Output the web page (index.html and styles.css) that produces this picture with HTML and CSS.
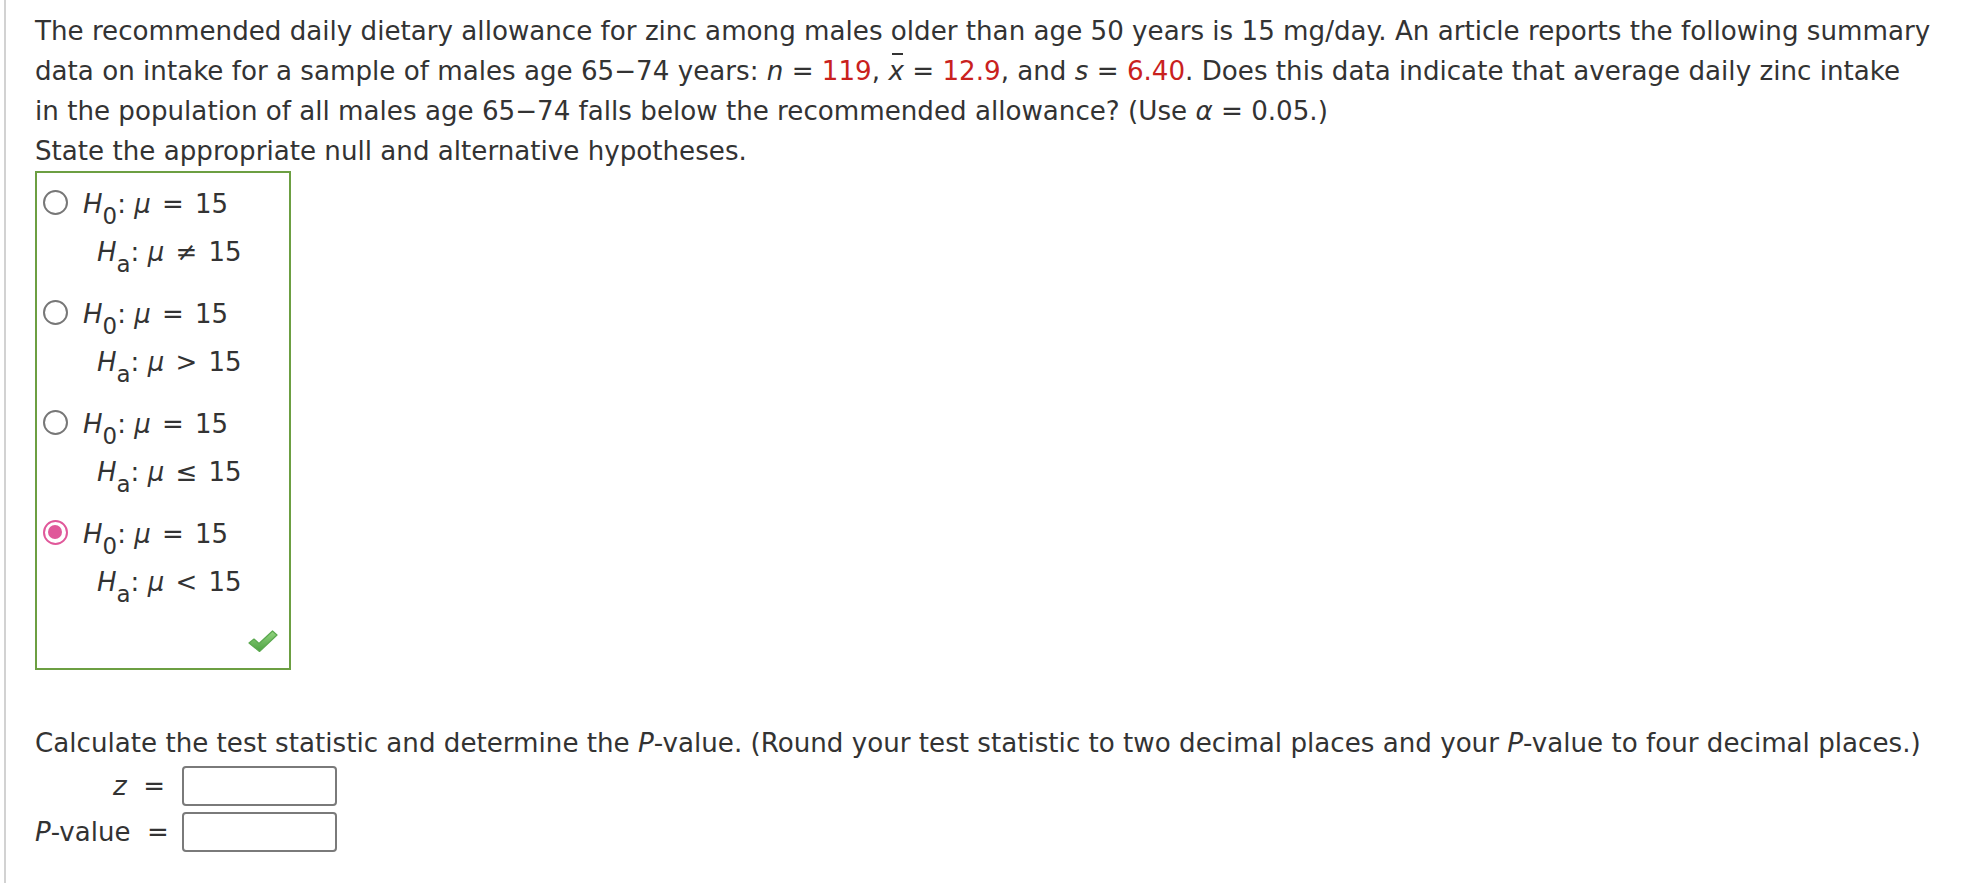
FILE: index.html
```html
<!DOCTYPE html>
<html lang="en">
<head>
<meta charset="utf-8">
<title>Hypothesis test</title>
<link rel="stylesheet" href="styles.css">
</head>
<body>
<div class="page">
  <p class="question">The recommended daily dietary allowance for zinc among males older than age 50 years is 15 mg/day. An article reports the following summary<br>data on intake for a sample of males age 65&minus;74 years: <i>n</i> = <span class="val">119</span>, <span class="xbar"><i>x</i></span> = <span class="val">12.9</span>, and <i>s</i> = <span class="val">6.40</span>. Does this data indicate that average daily zinc intake<br>in the population of all males age 65&minus;74 falls below the recommended allowance? (Use <i>&alpha;</i> = 0.05.)</p>
  <p class="question">State the appropriate null and alternative hypotheses.</p>

  <div class="choices">
    <div class="option">
      <span class="radio"></span>
      <div class="hyp">
        <div class="h0"><i>H</i><sub>0</sub>: <i>&mu;</i> <span class="rel">=</span> 15</div>
        <div class="ha"><i>H</i><sub class="suba">a</sub>: <i>&mu;</i> <span class="rel">&ne;</span> 15</div>
      </div>
    </div>
    <div class="option">
      <span class="radio"></span>
      <div class="hyp">
        <div class="h0"><i>H</i><sub>0</sub>: <i>&mu;</i> <span class="rel">=</span> 15</div>
        <div class="ha"><i>H</i><sub class="suba">a</sub>: <i>&mu;</i> <span class="rel">&gt;</span> 15</div>
      </div>
    </div>
    <div class="option">
      <span class="radio"></span>
      <div class="hyp">
        <div class="h0"><i>H</i><sub>0</sub>: <i>&mu;</i> <span class="rel">=</span> 15</div>
        <div class="ha"><i>H</i><sub class="suba">a</sub>: <i>&mu;</i> <span class="rel">&le;</span> 15</div>
      </div>
    </div>
    <div class="option">
      <span class="radio checked"></span>
      <div class="hyp">
        <div class="h0"><i>H</i><sub>0</sub>: <i>&mu;</i> <span class="rel">=</span> 15</div>
        <div class="ha"><i>H</i><sub class="suba">a</sub>: <i>&mu;</i> <span class="rel">&lt;</span> 15</div>
      </div>
    </div>
    <div class="mark">
      <svg width="32" height="25" viewBox="0 0 32 25" aria-hidden="true">
        <defs>
          <linearGradient id="g" x1="0" y1="0" x2="0" y2="1">
            <stop offset="0" stop-color="#92d47f"/>
            <stop offset="1" stop-color="#4ea243"/>
          </linearGradient>
        </defs>
        <path d="M2 14 L7 10 L12 14.5 L25.5 2 L30 6 L12.5 22.5 Z" fill="url(#g)" stroke="#5aa84e" stroke-width="1.2" stroke-linejoin="round"/>
      </svg>
    </div>
  </div>

  <p class="question calc">Calculate the test statistic and determine the <i>P</i>-value. (Round your test statistic to two decimal places and your <i>P</i>-value to four decimal places.)</p>
  <div class="answers">
    <span class="lbl"><i>z</i> &nbsp;=</span>
    <span class="field"></span>
    <span class="lbl"><i>P</i>-value &nbsp;=</span>
    <span class="field"></span>
  </div>
</div>
</body>
</html>
```

FILE: styles.css
```css
html, body {
  margin: 0;
  padding: 0;
  background: #ffffff;
}

body {
  font-family: "DejaVu Sans", "Liberation Sans", sans-serif;
  font-size: 26px;
  color: #333333;
}

.page {
  margin-left: 4px;
  border-left: 2px solid #d2d2d2;
  padding: 11px 0 0 29px;
  min-height: 883px;
  box-sizing: border-box;
}

.question {
  margin: 0;
  font-size: 26.15px;
  line-height: 40px;
  white-space: nowrap;
}

.val {
  color: #c9211e;
}

.xbar {
  position: relative;
}

.xbar::before {
  content: "";
  position: absolute;
  left: 4px;
  right: 1px;
  top: -3px;
  border-top: 2px solid #333333;
}

.choices {
  width: 256px;
  height: 499px;
  box-sizing: border-box;
  border: 2px solid #6c9f42;
  padding: 7px 0 0 6px;
  display: flex;
  flex-direction: column;
  gap: 14px;
}

.option {
  display: flex;
  align-items: flex-start;
  gap: 15px;
}

.radio {
  flex: none;
  width: 25px;
  height: 25px;
  margin-top: 10px;
  box-sizing: border-box;
  border: 2px solid #777777;
  border-radius: 50%;
  background: #ffffff;
  position: relative;
}

.radio.checked {
  border: 2.5px solid #e0589a;
}

.radio.checked::after {
  content: "";
  position: absolute;
  left: 3px;
  top: 3px;
  width: 14px;
  height: 14px;
  border-radius: 50%;
  background: #e0589a;
}

.hyp {
  line-height: 48px;
  white-space: nowrap;
}

.ha {
  padding-left: 14px;
}

.rel {
  margin: 0 3px;
}

sub {
  font-size: 0.88em;
  vertical-align: -11px;
  line-height: 0;
}

.mark {
  margin-top: auto;
  display: flex;
  justify-content: flex-end;
  padding: 0 10px 14px 0;
}

.mark svg {
  display: block;
}

.calc {
  margin-top: 53px;
}

.answers {
  margin-top: 3px;
  display: grid;
  grid-template-columns: 130px 155px;
  column-gap: 17px;
  row-gap: 6px;
  align-items: center;
}

.lbl {
  text-align: right;
  white-space: nowrap;
}

.field {
  display: block;
  height: 40px;
  box-sizing: border-box;
  border: 2px solid #7a7a7a;
  border-radius: 4px;
  background: #ffffff;
}
```
